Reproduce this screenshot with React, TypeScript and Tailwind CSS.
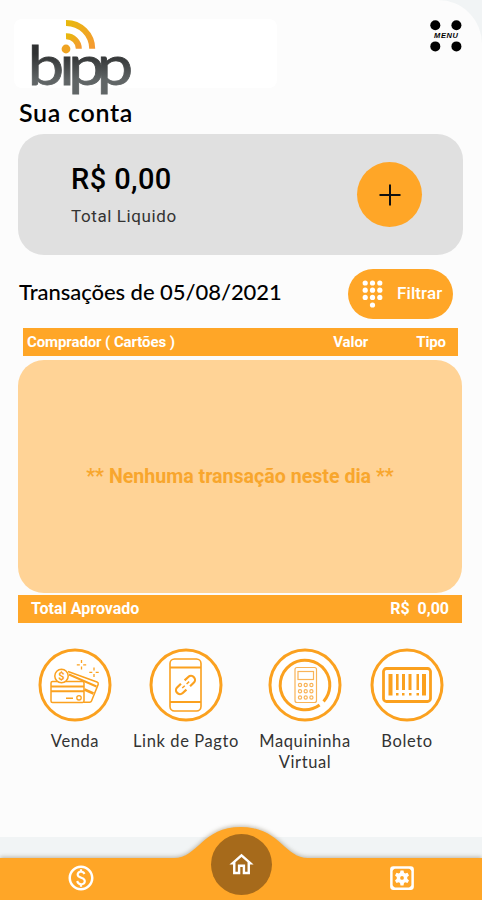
import type { ReactNode } from "react";

function Logo() {
  return (
    <svg width="120" height="86" viewBox="24 14 120 86" className="block">
      <defs>
        <linearGradient id="word" x1="0" y1="0" x2="0" y2="1">
          <stop offset="0.35" stopColor="#2f3132" />
          <stop offset="0.75" stopColor="#606566" />
        </linearGradient>
        <linearGradient id="waves" x1="0" y1="0" x2="1" y2="1">
          <stop offset="0" stopColor="#e8b80c" />
          <stop offset="1" stopColor="#f59a32" />
        </linearGradient>
      </defs>
      <text
        x="23.5 50.2 57.9 82"
        y="84.8"
        fontSize="55"
        transform="scale(1.18 1)"
        fill="url(#word)"
        stroke="url(#word)"
        strokeWidth="0.8"
        fontFamily="Lato, sans-serif"
      >
        bipp
      </text>
      <circle cx="66" cy="47" r="7.5" fill="#fff" />
      <circle cx="66" cy="49" r="4.4" fill="#efa322" />
      <path d="M66 36.2A12.5 12.5 0 0 1 78.8 48.8" fill="none" stroke="url(#waves)" strokeWidth="6" />
      <path d="M66 23A26 26 0 0 1 92.2 48.8" fill="none" stroke="url(#waves)" strokeWidth="6" />
    </svg>
  );
}

function MenuButton() {
  return (
    <button className="w-[32px] h-[32px]">
      <svg width="32" height="32" viewBox="0 0 32 32">
        <circle cx="5.3" cy="5.3" r="5" />
        <circle cx="26.4" cy="5.3" r="5" />
        <circle cx="5.3" cy="26.4" r="5" />
        <circle cx="26.4" cy="26.4" r="5" />
        <text
          x="4"
          y="18.4"
          fontSize="7.5"
          textLength="24"
          fontWeight="700"
          fontStyle="italic"
          fontFamily="Liberation Sans, sans-serif"
        >
          MENU
        </text>
      </svg>
    </button>
  );
}

function CardsIcon() {
  return (
    <>
      <g fill="none" stroke="#fba11f" strokeWidth="1.5" strokeLinejoin="round">
        <path d="M30 23.5L59 34a2 2 0 0 1 1.2 2.4L53.5 53a2 2 0 0 1-2 1.3H46" />
        <path d="M31 26.5L58.5 38.5" strokeWidth="2" />
        <path d="M46.5 41.5L55.5 45.5" strokeWidth="2.5" />
        <rect x="13" y="33.5" width="33" height="21" rx="1.5" fill="#fff" />
        <circle cx="23.5" cy="28" r="6.7" fill="#fff" />
      </g>
      <path d="M13 37.5h33v2H13zM13 42.2h33v2H13zM28 49.5h7v1.6h-7z" fill="#fba11f" />
      <circle cx="41" cy="49.8" r="2.2" fill="none" stroke="#fba11f" strokeWidth="1.3" />
      <text x="23.5" y="32" fontSize="11" fontWeight="700" textAnchor="middle" fill="#fba11f" fontFamily="Roboto, sans-serif">
        $
      </text>
      <path
        d="M43.5 12v3M43.5 18.5v3M38.8 16.8h3M45.2 16.8h3M56 19.5v3M56 26v3M51.3 24.3h3M57.7 24.3h3"
        stroke="#fba11f"
        strokeWidth="1.3"
      />
    </>
  );
}

function PhoneIcon() {
  return (
    <g fill="none" stroke="#fba11f" strokeWidth="1.6">
      <rect x="21" y="11" width="31" height="52" rx="4.5" />
      <path d="M21 19.5h31M21 54h31" strokeWidth="2" />
      <g strokeWidth="2.2" transform="rotate(-43 36.5 37)">
        <path d="M34 33h-5a4 4 0 0 0 0 8h5M39 33h5a4 4 0 0 1 0 8h-5" />
        <path d="M32 37h3.500M38 37h3.500" strokeWidth="1.5" />
      </g>
    </g>
  );
}

function TerminalIcon() {
  return (
    <g fill="none" stroke="#fba11f">
      <circle cx="37" cy="37" r="24.8" strokeWidth="3" strokeDasharray="149.3 6.5" transform="rotate(54 37 37)" />
      <g stroke="#f9b458" strokeWidth="1.2">
        <rect x="27" y="19.5" width="21.5" height="35" rx="2" />
        <rect x="30" y="23.5" width="15.5" height="8" />
        {[37, 43.3, 49.5].map((y) => (
          <g key={y}>
            <circle cx="32" cy={y} r="1.6" />
            <circle cx="37.7" cy={y} r="1.6" />
            <circle cx="43.4" cy={y} r="1.6" />
          </g>
        ))}
      </g>
    </g>
  );
}

function BarcodeIcon() {
  return (
    <>
      <rect x="13.5" y="20.5" width="47" height="33" rx="3" fill="none" stroke="#fba11f" strokeWidth="2.8" />
      <g fill="#fba11f">
        <rect x="18.5" y="26" width="4" height="21.5" />
        <rect x="52" y="26" width="4" height="21.5" />
        <rect x="26" y="26" width="2.6" height="16" />
        <rect x="32" y="26" width="3" height="16" />
        <rect x="38.5" y="26" width="3" height="16" />
        <rect x="46.5" y="26" width="2.5" height="16" />
        <path d="M26 45h2.5v2.5H26zM32 45h2.5v2.5H32zM39 45h2.5v2.5H39zM46.5 45h2.5v2.5h-2.5z" />
      </g>
    </>
  );
}

function Action({ label, className, children }: { label: string; className: string; children: ReactNode }) {
  return (
    <button className={`flex flex-col items-center ${className}`}>
      <svg width="74" height="74" viewBox="0 0 74 74">
        <circle cx="37" cy="37" r="35" fill="#fff" stroke="#fba11f" strokeWidth="3" />
        {children}
      </svg>
      <span className="mt-[9px] text-[16.5px] leading-[21px] tracking-[0.6px] text-[#333] whitespace-pre">
        {label}
      </span>
    </button>
  );
}

export default function App() {
  return (
    <div className="w-[482px] h-[900px] overflow-hidden bg-[#f1f4f5] flex flex-col font-[Lato,sans-serif] text-black">
      <main className="h-[837px] shrink-0 bg-[#fcfcfc] rounded-tr-[44px] px-[18px]">
        {/* Header */}
        <header className="h-[97px] flex justify-between">
          <div className="-ml-[4px] mt-[19px] w-[263px] h-[69px] rounded-lg bg-white">
            <div className="ml-[10px] -mt-[5px]">
              <Logo />
            </div>
          </div>
          <div className="mt-[20px] mr-[2px]">
            <MenuButton />
          </div>
        </header>

        <h1 className="ml-[1px] text-[25px] leading-[30px] font-semibold tracking-[0.7px]">Sua conta</h1>

        {/* Balance */}
        <section className="mt-[7px] h-[121px] w-[445px] rounded-[26px] bg-[#e0e0e0] flex items-center justify-between pl-[53px] pr-[41px] font-[Roboto,sans-serif]">
          <div className="pt-[2px]">
            <p className="text-[29px] leading-[38px] font-medium tracking-[0.4px] whitespace-nowrap">R$ 0,00</p>
            <p className="mt-[3px] text-[17px] leading-[30px] tracking-[0.6px] text-[#333]">Total Liquido</p>
          </div>
          <button className="w-[65px] h-[65px] rounded-full bg-[#ffa627] flex items-center justify-center">
            <svg width="22" height="22" viewBox="0 0 22 22">
              <path d="M11 .5v21M.5 11h21" stroke="#111" strokeWidth="2" />
            </svg>
          </button>
        </section>

        {/* Transactions */}
        <div className="mt-[14px] h-[50px] flex items-center justify-between pr-[11px]">
          <h2 className="ml-[1px] text-[22px] leading-[28px] font-medium tracking-[-0.04px] -mt-[5px] whitespace-nowrap">
            Transações de 05/08/2021
          </h2>
          <button className="w-[105px] h-[50px] rounded-full bg-[#ffa627] flex items-center pl-[14px] gap-[13px] text-white">
            <svg width="22" height="29" viewBox="0 0 22 29" fill="currentColor">
              {[3, 10.2, 17.4].map((y) => (
                <g key={y}>
                  <circle cx="3.2" cy={y} r="2.6" />
                  <circle cx="10.5" cy={y} r="2.6" />
                  <circle cx="17.8" cy={y} r="2.6" />
                </g>
              ))}
              <circle cx="10.5" cy="25" r="2.6" />
            </svg>
            <span className="font-[Roboto,sans-serif] font-medium text-[17px] tracking-[0.1px]">Filtrar</span>
          </button>
        </div>

        <div className="mt-[9px] ml-[5px] w-[435px] h-[28px] bg-[#ffa627] text-white flex items-center pl-[4px] pr-[12px] font-[Roboto,sans-serif] font-bold text-[15px] tracking-[-0.1px]">
          <span className="grow">Comprador ( Cartões )</span>
          <span className="w-[83px]">Valor</span>
          <span>Tipo</span>
        </div>
        <div className="mt-[4px] w-[444px] h-[233px] rounded-[26px] bg-[#ffd396] flex items-center justify-center">
          <p className="font-[Roboto,sans-serif] font-bold text-[19.6px] text-[#f8a62d] whitespace-nowrap">
            ** Nenhuma transação neste dia **
          </p>
        </div>
        <div className="mt-[2px] w-[444px] h-[28px] bg-[#ffa627] text-white flex items-center justify-between pl-[13px] pr-[13px] font-[Roboto,sans-serif] font-bold text-[16px]">
          <span>Total Aprovado</span>
          <span className="whitespace-pre">R$  0,00</span>
        </div>

        {/* Shortcuts */}
        <div className="mt-[25px] flex">
          <Action label="Venda" className="w-[114px]">
            <CardsIcon />
          </Action>
          <Action label="Link de Pagto" className="w-[108px]">
            <PhoneIcon />
          </Action>
          <Action label={"Maquininha\nVirtual"} className="w-[130px]">
            <TerminalIcon />
          </Action>
          <Action label="Boleto" className="w-[74px]">
            <BarcodeIcon />
          </Action>
        </div>
      </main>

      {/* Bottom bar */}
      <nav className="relative -mt-[12px] h-[75px] shrink-0 text-white">
        <svg width="482" height="75" viewBox="0 0 482 75" className="absolute inset-0 drop-shadow-[0_-1px_2px_rgba(80,60,20,0.35)]">
          <path d="M0 33H174C198 33 202 2 241 2S284 33 308 33H482V75H0Z" fill="#ffa627" />
        </svg>
        <div className="relative flex items-start">
          <div className="w-[161px] pt-[38px] flex justify-center">
            <svg width="30" height="30" viewBox="0 0 24 24" fill="currentColor">
              <path d="M12 2C6.48 2 2 6.48 2 12s4.48 10 10 10 10-4.48 10-10S17.52 2 12 2zm0 18c-4.41 0-8-3.59-8-8s3.59-8 8-8 8 3.59 8 8-3.59 8-8 8zm.89-8.9c-1.78-.59-2.64-.96-2.64-1.9 0-1.02 1.11-1.39 1.81-1.39 1.31 0 1.79.99 1.9 1.34l1.58-.67c-.15-.44-.82-1.91-2.66-2.23V5h-1.75v1.26c-2.6.56-2.62 2.85-2.62 2.96 0 2.27 2.25 2.91 3.35 3.31 1.58.56 2.28 1.07 2.28 2.03 0 1.13-1.05 1.61-1.98 1.61-1.82 0-2.34-1.87-2.4-2.09l-1.66.67c.63 2.19 2.28 2.78 3.02 2.96V19h1.75v-1.24c.52-.09 3.02-.59 3.02-3.22.01-1.39-.6-2.61-3-3.44z" />
            </svg>
          </div>
          <div className="w-[160px] pt-[9px] flex justify-center">
            <div className="w-[61px] h-[61px] rounded-full bg-[#a66a1b] flex items-center justify-center">
              <svg width="29" height="29" viewBox="0 0 24 24" fill="currentColor">
                <path d="M12 5.69l5 4.5V18h-2v-6H9v6H7v-7.81l5-4.5M12 3L2 12h3v8h6v-6h2v6h6v-8h3L12 3z" />
              </svg>
            </div>
          </div>
          <div className="w-[161px] pt-[38px] flex justify-center">
            <svg width="30" height="30" viewBox="0 0 24 24" fill="currentColor">
              <path
                fillRule="evenodd"
                d="M5 2.5h14a2.5 2.5 0 0 1 2.5 2.5v14a2.5 2.5 0 0 1-2.5 2.5H5a2.5 2.5 0 0 1-2.5-2.5V5A2.5 2.5 0 0 1 5 2.5zm-.5 2v15h15v-15z"
              />
              <path d="M4 4h2.5L4 6.5zM20 4v2.5L17.5 4zM4 20v-2.5L6.5 20zM20 20h-2.5l2.5-2.5z" />
              <path
                fillRule="evenodd"
                d="M10.8 6h2.4l.4 1.8 1 .6 1.8-.6 1.2 2.1-1.4 1.3v1.4l1.4 1.3-1.2 2.1-1.8-.6-1 .6-.4 2h-2.4l-.4-2-1-.6-1.8.6-1.2-2.1 1.4-1.3v-1.4L6.4 9.9l1.2-2.1 1.8.6 1-.6zM12 10.4a1.5 1.5 0 1 0 0 3a1.5 1.5 0 0 0 0-3z"
              />
            </svg>
          </div>
        </div>
      </nav>
    </div>
  );
}
